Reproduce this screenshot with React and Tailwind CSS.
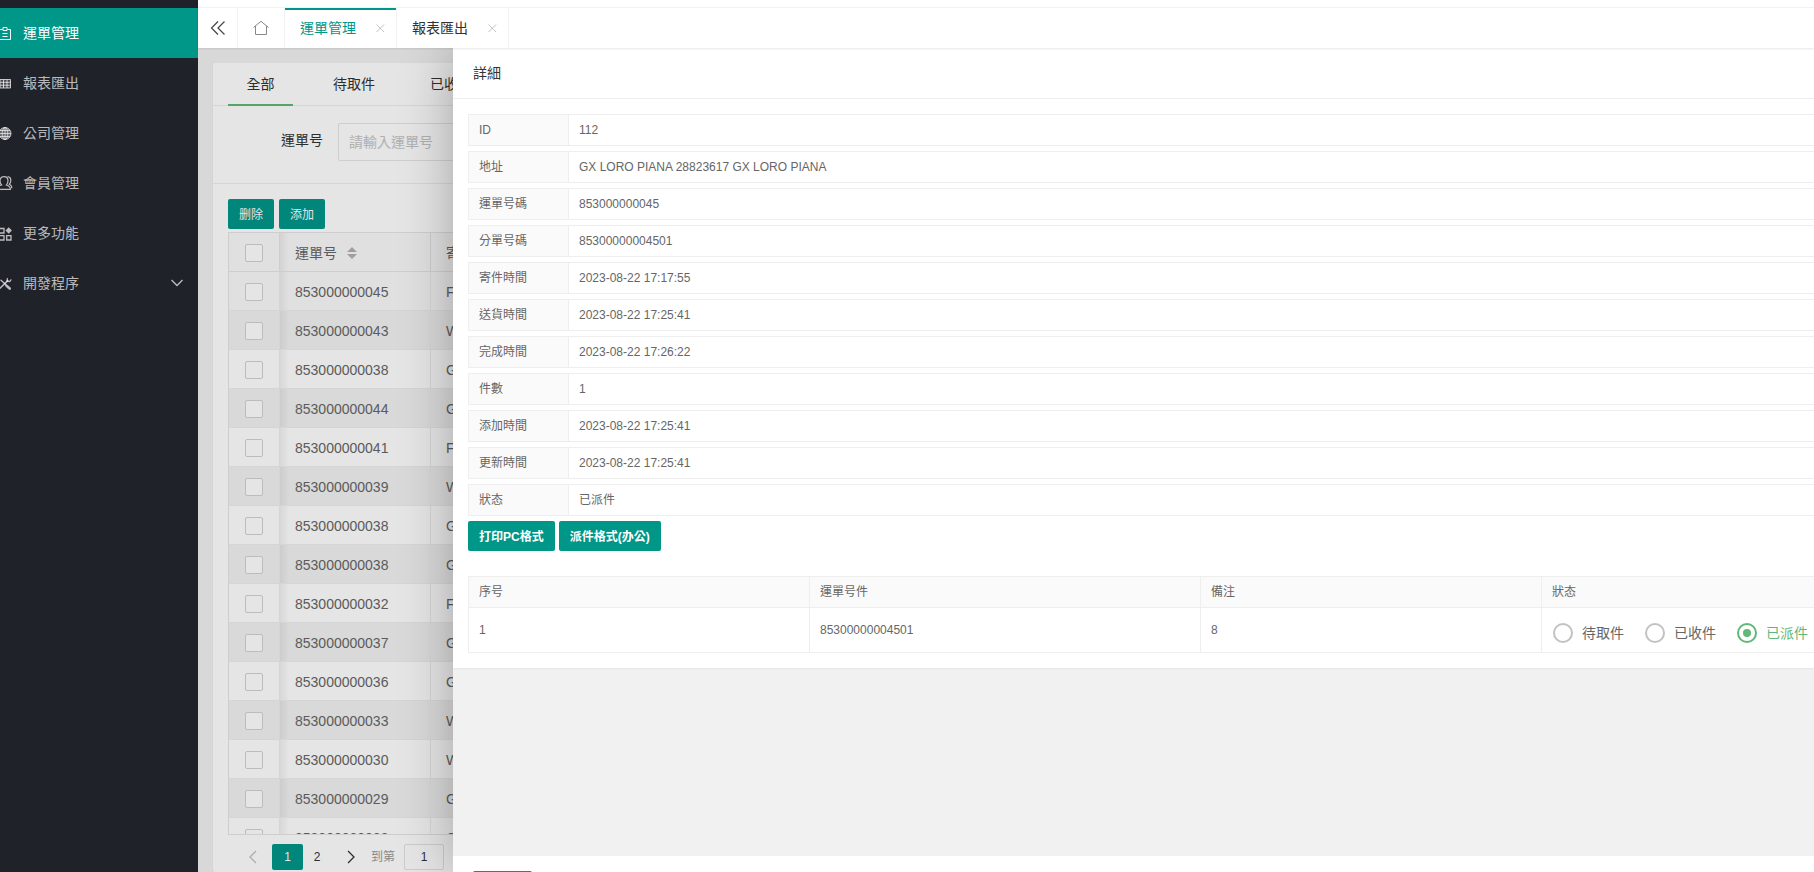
import React, { useState } from 'react';

const menuItems = [
  { key: 'waybill', label: '運單管理' },
  { key: 'report', label: '報表匯出' },
  { key: 'company', label: '公司管理' },
  { key: 'member', label: '會員管理' },
  { key: 'more', label: '更多功能' },
  { key: 'dev', label: '開發程序', children: true }
];

const statusTabs = ['全部', '待取件', '已收件'];

const waybills = [
  { no: '853000000045', sender: 'F' },
  { no: '853000000043', sender: 'W' },
  { no: '853000000038', sender: 'G' },
  { no: '853000000044', sender: 'G' },
  { no: '853000000041', sender: 'F' },
  { no: '853000000039', sender: 'W' },
  { no: '853000000038', sender: 'G' },
  { no: '853000000038', sender: 'G' },
  { no: '853000000032', sender: 'F' },
  { no: '853000000037', sender: 'G' },
  { no: '853000000036', sender: 'G' },
  { no: '853000000033', sender: 'W' },
  { no: '853000000030', sender: 'W' },
  { no: '853000000029', sender: 'G' },
  { no: '853000000028', sender: 'G' }
];

const details = [
  { label: 'ID', value: '112' },
  { label: '地址', value: 'GX LORO PIANA 28823617 GX LORO PIANA' },
  { label: '運單号碼', value: '853000000045' },
  { label: '分單号碼', value: '85300000004501' },
  { label: '寄件時間', value: '2023-08-22 17:17:55' },
  { label: '送貨時間', value: '2023-08-22 17:25:41' },
  { label: '完成時間', value: '2023-08-22 17:26:22' },
  { label: '件數', value: '1' },
  { label: '添加時間', value: '2023-08-22 17:25:41' },
  { label: '更新時間', value: '2023-08-22 17:25:41' },
  { label: '狀态', value: '已派件' }
];

const MenuIcon = ({ name }) => {
  const shapes = {
    waybill: (
      <g fill="none" stroke="currentColor">
        <path d="M7.5 4.5h-3v10h11v-10h-3" />
        <path d="M8 2.500h4v3H8zM7.500 8.500h5M7.500 11.500h5" />
      </g>
    ),
    report: (
      <g fill="none" stroke="currentColor">
        <path d="M1.500 4.500h14v8.500h-14z" fill="currentColor" fillOpacity="0.25" />
        <path d="M1.500 7.300h14M1.500 10.200h14M5 4.500v8.500M8.500 4.500v8.500M12 4.500v8.500" />
      </g>
    ),
    company: (
      <g>
        <circle cx="10" cy="8.500" r="6" fill="currentColor" fillOpacity="0.45" stroke="currentColor" />
        <g fill="none" stroke="currentColor" strokeWidth="0.9">
          <ellipse cx="10" cy="8.500" rx="2.800" ry="6" />
          <path d="M10 2.500v12M4 8.500h12M5 5.500h10M5 11.500h10" />
        </g>
      </g>
    ),
    member: (
      <g fill="none" stroke="currentColor" strokeWidth="1.2">
        <path d="M2 14.400c0-2.800 2-3.600 4.600-4.400C5.400 8.800 5 7.500 5 5.800 5 3.200 6.700 1.600 9 1.600s4 1.600 4 4.200c0 1.700-.4 3-1.600 4.200 2.600.8 4 1.600 4 4.400z" />
        <path d="M12.500 1.700c2 .2 3.300 1.700 3.300 3.800 0 1.600-.5 2.700-1.500 3.700 1.700.7 2.500 1.800 2.500 4" />
      </g>
    ),
    more: (
      <g fill="none" stroke="currentColor" strokeWidth="1.3">
        <path d="M4 3.500h5v4.500H4zM4 10.700h5v4.300H4zM11.700 10.700h4.300v4.300h-4.300z" />
        <path d="M13.700 2.200l3.200 3.300-3.200 3.300-3.200-3.300z" fill="currentColor" stroke="none" />
      </g>
    ),
    dev: (
      <g fill="none" stroke="currentColor" strokeLinecap="round" transform="translate(1 .8)">
        <path d="M5 4.500l5 4.500" strokeWidth="1.400" />
        <path d="M11.800 4.800L4 12.500" strokeWidth="1.500" />
        <path d="M11.400 2.800l-.4 2.600 2.700.4 1.200-1.700" strokeWidth="1.300" />
        <path d="M10.500 10l3.200 2.800" strokeWidth="2.600" />
      </g>
    )
  };

  return (
    <svg className="-ml-[5px] mr-3 size-4 shrink-0 overflow-visible" viewBox="0 0 16 16" aria-hidden="true">
      {shapes[name]}
    </svg>
  );
};

const CloseIcon = () => (
  <svg className="size-4" viewBox="0 0 16 16" fill="none" stroke="currentColor" aria-hidden="true">
    <path d="M4.500 4.500l7.500 7.500M12 4.500L4.500 12" />
  </svg>
);

const Chevron = ({ d }) => (
  <svg className="size-4" viewBox="0 0 16 16" fill="none" stroke="currentColor" strokeWidth="1.3" aria-hidden="true">
    <path d={d} />
  </svg>
);

const Sidebar = () => (
  <nav className="w-[198px] shrink-0 bg-[#20222a] pt-2">
    {menuItems.map((item, index) => (
      <a
        key={item.key}
        href="#"
        className={`flex h-[50px] items-center pr-[13px] text-sm ${
          index === 0 ? 'bg-[#009688] text-white' : 'text-white/70'
        }`}
      >
        <MenuIcon name={item.key} />
        <span className="flex-1">{item.label}</span>
        {item.children && <Chevron d="M2.500 5l5.500 5.500L13.500 5" />}
      </a>
    ))}
  </nav>
);

const PageTab = ({ label, active }) => (
  <div
    className={`flex items-center gap-4 border-r border-[#f2f2f2] pl-[15px] pr-2 text-sm ${
      active ? 'text-[#009688] shadow-[inset_0_2px_0_#009688]' : 'text-[#333]'
    }`}
  >
    <a href="#">{label}</a>
    <button type="button" aria-label="關閉" className="text-[#c2c2c2]">
      <CloseIcon />
    </button>
  </div>
);

const TabBar = () => (
  <header className="relative z-10 bg-white pt-[7px] shadow-[0_1px_2px_0_rgba(0,0,0,0.1)]">
    <div className="flex h-[41px] border-t border-[#f2f2f2]">
      <button
        type="button"
        aria-label="收起"
        className="flex w-10 items-center justify-center border-r border-[#f2f2f2] text-[#444]"
      >
        <svg className="size-4" viewBox="0 0 16 16" fill="none" stroke="currentColor" strokeWidth="1.2" aria-hidden="true">
          <path d="M8 1.500L1.500 8 8 14.500M14.500 1.500L8 8l6.500 6.500" />
        </svg>
      </button>
      <a
        href="#"
        aria-label="首頁"
        className="flex w-[47px] items-center justify-center border-r border-[#f2f2f2] text-[#888]"
      >
        <svg className="size-4" viewBox="0 0 16 16" fill="none" stroke="currentColor" strokeWidth="1" aria-hidden="true">
          <path d="M.5 7.500L8 1.300l7.500 6.200M2.500 6v8.500h11V6" />
        </svg>
      </a>
      <PageTab label="運單管理" active />
      <PageTab label="報表匯出" />
    </div>
  </header>
);

const checkboxClass =
  'block size-[18px] appearance-none rounded-xs border border-[#d2d2d2] bg-white checked:bg-[#5fb878]';

// shade thrown by the fixed checkbox column
const fixedShade = 'bg-[linear-gradient(to_right,rgba(0,0,0,0.06),transparent_9px)]';

const WaybillTable = () => (
  <div className="mt-[3px] min-h-0 flex-1 overflow-hidden border-y border-l border-[#e6e6e6]">
    <table className="w-full table-fixed border-separate border-spacing-0 text-left text-sm text-[#666]">
      <thead>
        <tr className="h-[39px] bg-[#fafafa]">
          <th className="w-[51px] border-r border-b border-[#e6e6e6] pt-0.5 pl-4">
            <input type="checkbox" aria-label="全選" className={checkboxClass} />
          </th>
          <th className={`w-[151px] border-r border-b border-[#e6e6e6] pt-0.5 pl-[15px] font-normal ${fixedShade}`}>
            <span className="flex items-center gap-2.5">
              運單号
              <svg className="h-3 w-2.5 text-[#b2b2b2]" viewBox="0 0 10 12" fill="currentColor" aria-hidden="true">
                <path d="M5 0l5 5H0zM5 12l5-5H0z" />
              </svg>
            </span>
          </th>
          <th className="border-b border-[#e6e6e6] pt-0.5 pl-[15px] font-normal">寄</th>
        </tr>
      </thead>
      <tbody>
        {waybills.map((row, index) => (
          <tr
            key={index}
            className={`h-[39px] ${index === 0 ? 'bg-[#fafafa]' : index % 2 ? 'bg-[#f2f2f2]' : 'bg-white'}`}
          >
            <td className="border-r border-b border-[#eee] pt-0.5 pl-4">
              <input type="checkbox" aria-label={row.no} className={checkboxClass} />
            </td>
            <td className={`border-r border-b border-[#eee] pt-0.5 pl-[15px] ${fixedShade}`}>{row.no}</td>
            <td className="border-b border-[#eee] pt-0.5 pl-[15px]">{row.sender}</td>
          </tr>
        ))}
      </tbody>
    </table>
  </div>
);

const Pagination = () => (
  <div className="flex shrink-0 pt-[9px] pb-0.5 pl-1.5 text-xs text-[#333]">
    <button type="button" aria-label="上一頁" className="flex h-[26px] w-[38px] items-center justify-center text-[#c2c2c2]">
      <Chevron d="M11 2L5 8l6 6" />
    </button>
    <button type="button" className="h-[26px] w-[31px] rounded-xs bg-[#009688] text-white">1</button>
    <button type="button" className="h-[26px] w-7">2</button>
    <button type="button" aria-label="下一頁" className="flex h-[26px] w-10 items-center justify-center">
      <Chevron d="M5 2l6 6-6 6" />
    </button>
    <label className="flex items-center gap-[9px] text-[#999]">
      到第
      <input
        type="text"
        defaultValue="1"
        className="h-[26px] w-10 rounded-xs border border-[#e2e2e2] bg-white text-center text-[#333]"
      />
    </label>
  </div>
);

const WaybillList = () => (
  <section className="flex h-full flex-col pt-[15px] pl-[15px]">
    <div className="flex min-h-0 flex-1 flex-col rounded-xs bg-white shadow-[0_1px_2px_0_rgba(0,0,0,0.05)]">
      <div className="flex h-[43px] shrink-0 gap-[25px] border-b border-[#eee] pl-[15px] text-sm text-[#333]">
        {statusTabs.map((tab, index) => (
          <button
            key={tab}
            type="button"
            className={`-mb-px min-w-[65px] px-[15px] pb-0.5 ${index === 0 ? 'shadow-[inset_0_-2px_0_#5fb878]' : ''}`}
          >
            {tab}
          </button>
        ))}
      </div>
      <form className="flex shrink-0 items-center gap-[15px] border-b border-[#eee] pt-[17px] pb-[22px] pl-[68px] text-sm">
        <label htmlFor="waybill-no" className="pb-1 text-[#333]">運單号</label>
        <input
          id="waybill-no"
          type="text"
          placeholder="請輸入運單号"
          className="h-[38px] w-[190px] rounded-xs border border-[#e6e6e6] bg-white pl-2.5 placeholder:text-[#c4c4c4]"
        />
      </form>
      <div className="flex min-h-0 flex-1 flex-col pt-[15px] pl-[15px]">
        <div className="flex shrink-0 gap-[5px] text-xs text-white">
          <button type="button" className="h-[30px] rounded-xs bg-[#009688] px-[11px] pt-0.5">删除</button>
          <button type="button" className="h-[30px] rounded-xs bg-[#009688] px-[11px] pt-0.5">添加</button>
        </div>
        <WaybillTable />
        <Pagination />
      </div>
    </div>
  </section>
);

const PieceTable = () => {
  const [status, setStatus] = useState('已派件');

  return (
    <table className="mt-[25px] w-full table-fixed border-separate border-spacing-0 border-t border-l border-[#eee] text-left">
      <thead>
        <tr className="h-[31px] bg-[#fafafa]">
          <th className="w-[341px] border-r border-b border-[#eee] px-2.5 font-normal">序号</th>
          <th className="w-[391px] border-r border-b border-[#eee] px-2.5 font-normal">運單号件</th>
          <th className="w-[341px] border-r border-b border-[#eee] px-2.5 font-normal">備注</th>
          <th className="border-b border-[#eee] px-2.5 font-normal">狀态</th>
        </tr>
      </thead>
      <tbody>
        <tr className="h-[45px]">
          <td className="border-r border-b border-[#eee] px-2.5">1</td>
          <td className="border-r border-b border-[#eee] px-2.5">85300000004501</td>
          <td className="border-r border-b border-[#eee] px-2.5">8</td>
          <td className="border-b border-[#eee] pl-[11px]">
            <div className="flex gap-[21px] pt-1.5 text-sm whitespace-nowrap">
              {['待取件', '已收件', '已派件'].map((option) => (
                <label
                  key={option}
                  className={`flex items-center gap-[9px] ${status === option ? 'text-[#5fb878]' : ''}`}
                >
                  <input
                    type="radio"
                    name="status"
                    checked={status === option}
                    onChange={() => setStatus(option)}
                    className="grid size-5 shrink-0 appearance-none place-content-center rounded-full border-2 border-[#c2c2c2] before:size-2 before:rounded-full checked:border-[#5fb878] checked:before:bg-[#5fb878]"
                  />
                  {option}
                </label>
              ))}
            </div>
          </td>
        </tr>
      </tbody>
    </table>
  );
};

const DetailDrawer = () => (
  <aside className="absolute inset-y-0 right-0 left-[255px] flex flex-col overflow-hidden bg-[#f1f1f1] shadow-[1px_1px_50px_rgba(0,0,0,0.3)]">
    <h2 className="h-[51px] shrink-0 border-b border-[#eee] bg-white pl-5 text-sm leading-[50px] text-[#333]">
      詳細
    </h2>
    <div className="min-h-0 flex-1">
      <div className="bg-white py-[15px] pl-[15px] text-xs text-[#666] shadow-[0_1px_2px_0_rgba(0,0,0,0.05)]">
        <dl>
          {details.map((item) => (
            <div key={item.label} className="mb-[5px] flex h-8 border-y border-l border-[#eee] leading-[30px]">
              <dt className="w-[100px] border-r border-[#eee] bg-[#fafafa] pl-2.5">{item.label}</dt>
              <dd className="flex-1 pl-2.5">{item.value}</dd>
            </div>
          ))}
        </dl>
        <div className="flex gap-1 font-bold text-white">
          <button type="button" className="h-[30px] rounded-xs bg-[#009688] px-[11px] pt-0.5">打印PC格式</button>
          <button type="button" className="h-[30px] rounded-xs bg-[#009688] px-[11px] pt-0.5">派件格式(办公)</button>
        </div>
        <PieceTable />
      </div>
    </div>
    <footer className="h-4 shrink-0 bg-white pt-[15px] pl-5">
      <button type="button" aria-label="確定" className="h-[38px] w-[59px] rounded-xs bg-[#009688]" />
    </footer>
  </aside>
);

export default function App() {
  return (
    <div className="flex h-screen overflow-hidden bg-[#f1f1f1] font-['Liberation_Sans','Noto_Sans_CJK_TC',sans-serif]">
      <Sidebar />
      <div className="flex min-w-0 flex-1 flex-col">
        <TabBar />
        <main className="relative min-h-0 flex-1 overflow-hidden">
          <WaybillList />
          <div className="absolute inset-0 bg-black/10" />
          <DetailDrawer />
        </main>
      </div>
    </div>
  );
}
